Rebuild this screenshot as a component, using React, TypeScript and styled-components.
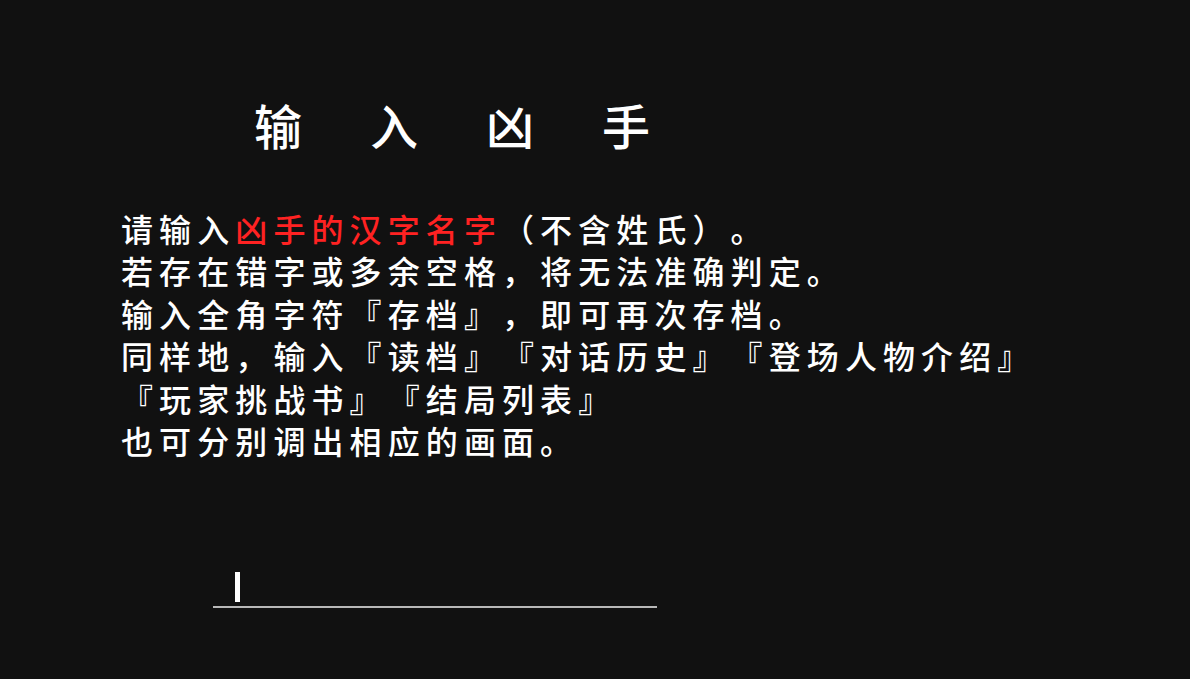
import React from "react";
import styled, { createGlobalStyle } from "styled-components";

const GlobalStyle = createGlobalStyle`
  html, body {
    margin: 0;
    padding: 0;
    background: #111111;
  }
  body {
    font-family: "Noto Sans CJK SC", "Noto Sans", sans-serif;
    color: #ffffff;
    text-spacing-trim: space-all;
    font-feature-settings: "fwid" 1;
  }
`;

const lines: { text: string; red?: string; rest?: string }[] = [
  { text: "请输入", red: "凶手的汉字名字", rest: "（不含姓氏）。" },
  { text: "若存在错字或多余空格，将无法准确判定。" },
  { text: "输入全角字符『存档』，即可再次存档。" },
  { text: "同样地，输入『读档』『对话历史』『登场人物介绍』" },
  { text: "『玩家挑战书』『结局列表』" },
  { text: "也可分别调出相应的画面。" },
];

export default function App() {
  return (
    <Screen>
      <GlobalStyle />
      <Title>输入凶手</Title>
      <Instructions>
        {lines.map((l, i) => (
          <Line key={i}>
            {l.text}
            {l.red && <Highlight>{l.red}</Highlight>}
            {l.rest}
          </Line>
        ))}
      </Instructions>
      <InputRow>
        <Cursor />
      </InputRow>
    </Screen>
  );
}

const Screen = styled.div`
  width: 1190px;
  height: 679px;
  background: #111111;
  display: flex;
  flex-direction: column;
  overflow: hidden;
`;

const Title = styled.div`
  padding: 100px 0 0 254px;
  height: 48px;
  font-size: 48px;
  line-height: 48px;
  font-weight: 500;
  letter-spacing: 68px;
  white-space: nowrap;
`;

const Instructions = styled.div`
  margin-top: 59px;
  padding-left: 121px;
  display: flex;
  flex-direction: column;
`;

const Line = styled.div`
  font-size: 32px;
  line-height: 42.4px;
  height: 42.4px;
  letter-spacing: 6.1px;
  font-weight: 500;
  white-space: nowrap;
`;

const Highlight = styled.span`
  color: #ff2222;
`;

const InputRow = styled.div`
  margin: 111px 0 0 213px;
  width: 444px;
  height: 36px;
  padding-left: 22px;
  box-sizing: border-box;
  border-bottom: 2px solid #b8b8b8;
  display: flex;
  align-items: flex-start;
`;

const Cursor = styled.span`
  display: block;
  width: 5px;
  height: 30px;
  background: #ffffff;
`;
